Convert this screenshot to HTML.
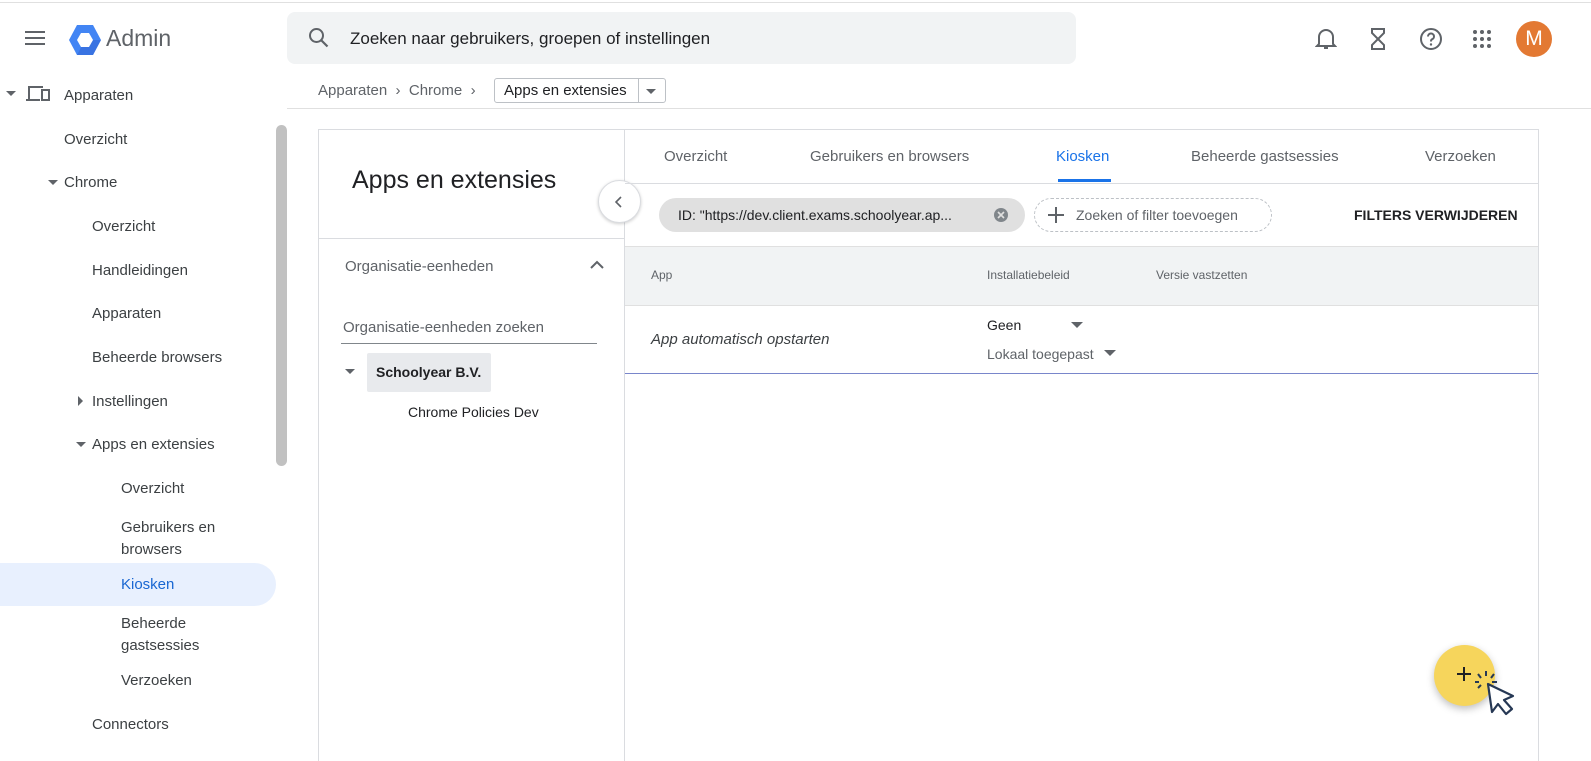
<!DOCTYPE html>
<html><head><meta charset="utf-8"><style>
*{box-sizing:border-box;margin:0;padding:0}
html,body{width:1591px;height:761px;overflow:hidden}
body{background:#fff;font-family:"Liberation Sans",sans-serif;color:#3c4043;position:relative}
.a{position:absolute;white-space:nowrap}
.nav{font-size:15px;color:#3c4043}
.tab{font-size:15px;color:#5f6368;top:148px}
</style></head><body>
<div class="a" style="left:0;top:0;width:1591px;height:3px;border-bottom:1px solid #e0e0e0"></div>
<svg class="a" style="left:24px;top:29px" width="22" height="18"><path d="M1 3h20M1 9h20M1 15h20" stroke="#5f6368" stroke-width="2"/></svg>
<svg class="a" style="left:68px;top:24px" width="34" height="32" viewBox="0 0 34 32"><polygon points="9,1 25,1 33,16 25,31 9,31 1,16" fill="#4285f4"/><polygon points="17,16 33,16 25,31 9,31" fill="#3367d6" opacity=".6"/><polygon points="13,9 21,9 25,16 21,23 13,23 9,16" fill="#fff"/></svg>
<div class="a" style="left:106px;top:25px;font-size:23px;color:#5f6368">Admin</div>
<div class="a" style="left:287px;top:12px;width:789px;height:52px;background:#f1f3f4;border-radius:8px"></div>
<svg class="a" style="left:308px;top:27px" width="22" height="22"><circle cx="8.5" cy="8.5" r="6.5" fill="none" stroke="#5f6368" stroke-width="2"/><path d="M13.5 13.5l6 6" stroke="#5f6368" stroke-width="2.2"/></svg>
<div class="a" style="left:350px;top:29px;font-size:17px;color:#202124">Zoeken naar gebruikers, groepen of instellingen</div>
<svg class="a" style="left:1315px;top:27px" width="22" height="24"><path d="M4 17V10a7 7 0 0 1 14 0v7l2 2H2z" fill="none" stroke="#5f6368" stroke-width="2"/><path d="M9 21h4" stroke="#5f6368" stroke-width="2"/></svg>
<svg class="a" style="left:1369px;top:27px" width="18" height="24"><path d="M2 2h14M2 22h14M3 2v4l6 6-6 6v4M15 2v4l-6 6 6 6v4" fill="none" stroke="#5f6368" stroke-width="2"/></svg>
<svg class="a" style="left:1419px;top:27px" width="24" height="24"><circle cx="12" cy="12" r="10" fill="none" stroke="#5f6368" stroke-width="2"/><path d="M9 9.5a3 3 0 1 1 4 2.8c-1 .5-1 1.2-1 2.2" fill="none" stroke="#5f6368" stroke-width="2"/><circle cx="12" cy="17.5" r="1.2" fill="#5f6368"/></svg>
<svg class="a" style="left:1472px;top:29px" width="20" height="20" fill="#5f6368"><circle cx="3" cy="3" r="2"/><circle cx="10" cy="3" r="2"/><circle cx="17" cy="3" r="2"/><circle cx="3" cy="10" r="2"/><circle cx="10" cy="10" r="2"/><circle cx="17" cy="10" r="2"/><circle cx="3" cy="17" r="2"/><circle cx="10" cy="17" r="2"/><circle cx="17" cy="17" r="2"/></svg>
<div class="a" style="left:1516px;top:21px;width:36px;height:36px;border-radius:50%;background:#e37933;color:#fff;font-size:21px;text-align:center;line-height:36px">M</div>
<svg class="a" style="left:6px;top:91px" width="10" height="6"><path d="M0 0h10L5 5z" fill="#5f6368"/></svg>
<svg class="a" style="left:25px;top:84px" width="26" height="20"><path d="M4 15V3h14" fill="none" stroke="#5f6368" stroke-width="2"/><path d="M1 16h14" stroke="#5f6368" stroke-width="2"/><rect x="17" y="6" width="7" height="10" fill="none" stroke="#5f6368" stroke-width="2"/></svg>
<div class="a nav" style="left:64px;top:87px">Apparaten</div>
<div class="a nav" style="left:64px;top:131px">Overzicht</div>
<svg class="a" style="left:48px;top:180px" width="10" height="6"><path d="M0 0h10L5 5z" fill="#5f6368"/></svg>
<div class="a nav" style="left:64px;top:174px">Chrome</div>
<div class="a nav" style="left:92px;top:218px">Overzicht</div>
<div class="a nav" style="left:92px;top:262px">Handleidingen</div>
<div class="a nav" style="left:92px;top:305px">Apparaten</div>
<div class="a nav" style="left:92px;top:349px">Beheerde browsers</div>
<svg class="a" style="left:78px;top:396px" width="6" height="10"><path d="M0 0v10l5-5z" fill="#5f6368"/></svg>
<div class="a nav" style="left:92px;top:393px">Instellingen</div>
<svg class="a" style="left:76px;top:442px" width="10" height="6"><path d="M0 0h10L5 5z" fill="#5f6368"/></svg>
<div class="a nav" style="left:92px;top:436px">Apps en extensies</div>
<div class="a nav" style="left:121px;top:480px">Overzicht</div>
<div class="a nav" style="left:121px;top:517px;line-height:22px">Gebruikers en<br>browsers</div>
<div class="a" style="left:0;top:563px;width:276px;height:43px;background:#e8f0fe;border-radius:0 22px 22px 0"></div>
<div class="a nav" style="left:121px;top:576px;color:#1967d2">Kiosken</div>
<div class="a nav" style="left:121px;top:613px;line-height:22px">Beheerde<br>gastsessies</div>
<div class="a nav" style="left:121px;top:672px">Verzoeken</div>
<div class="a nav" style="left:92px;top:716px">Connectors</div>
<div class="a" style="left:276px;top:125px;width:11px;height:341px;background:#c1c1c1;border-radius:6px"></div>
<div class="a" style="left:318px;top:82px;font-size:15px;color:#5f6368">Apparaten &nbsp;›&nbsp; Chrome &nbsp;›</div>
<div class="a" style="left:494px;top:78px;width:172px;height:25px;border:1px solid #bdc1c6;border-radius:3px"></div>
<div class="a" style="left:504px;top:82px;font-size:15px;color:#202124">Apps en extensies</div>
<div class="a" style="left:638px;top:78px;width:1px;height:25px;background:#bdc1c6"></div>
<svg class="a" style="left:646px;top:89px" width="10" height="6"><path d="M0 0h10L5 5z" fill="#5f6368"/></svg>
<div class="a" style="left:287px;top:108px;width:1304px;height:1px;background:#e0e0e0"></div>
<div class="a" style="left:318px;top:129px;width:1221px;height:632px;border:1px solid #dadce0;border-bottom:none"></div>
<div class="a" style="left:624px;top:129px;width:1px;height:632px;background:#dadce0"></div>
<div class="a" style="left:352px;top:166px;font-size:25px;color:#202124">Apps en extensies</div>
<div class="a" style="left:318px;top:238px;width:306px;height:1px;background:#dadce0"></div>
<div class="a" style="left:345px;top:258px;font-size:15px;color:#5f6368">Organisatie-eenheden</div>
<svg class="a" style="left:590px;top:260px" width="14" height="9"><path d="M1 8l6-6 6 6" fill="none" stroke="#5f6368" stroke-width="2"/></svg>
<div class="a" style="left:343px;top:319px;font-size:15px;color:#5f6368">Organisatie-eenheden zoeken</div>
<div class="a" style="left:341px;top:343px;width:256px;height:1px;background:#80868b"></div>
<svg class="a" style="left:345px;top:369px" width="10" height="6"><path d="M0 0h10L5 5z" fill="#5f6368"/></svg>
<div class="a" style="left:367px;top:353px;width:124px;height:39px;background:#e8eaed;border-radius:2px"></div>
<div class="a" style="left:376px;top:364px;font-size:14px;font-weight:bold;color:#202124">Schoolyear B.V.</div>
<div class="a" style="left:408px;top:404px;font-size:14px;color:#202124">Chrome Policies Dev</div>
<div class="a" style="left:598px;top:180px;width:43px;height:43px;border-radius:50%;background:#fff;border:1px solid #dadce0;box-shadow:0 1px 3px rgba(0,0,0,.2)"></div>
<svg class="a" style="left:615px;top:196px" width="8" height="12"><path d="M6 1L1 6l5 5" fill="none" stroke="#5f6368" stroke-width="1.6"/></svg>
<div class="a tab" style="left:664px">Overzicht</div>
<div class="a tab" style="left:810px">Gebruikers en browsers</div>
<div class="a tab" style="left:1056px;color:#1a73e8">Kiosken</div>
<div class="a" style="left:1058px;top:179px;width:53px;height:3px;background:#1a73e8"></div>
<div class="a tab" style="left:1191px">Beheerde gastsessies</div>
<div class="a tab" style="left:1425px">Verzoeken</div>
<div class="a" style="left:625px;top:183px;width:913px;height:1px;background:#dadce0"></div>
<div class="a" style="left:659px;top:198px;width:366px;height:34px;background:#e0e0e0;border-radius:17px"></div>
<div class="a" style="left:678px;top:207px;font-size:14px;color:#202124">ID: "https://dev.client.exams.schoolyear.ap...</div>
<svg class="a" style="left:993px;top:207px" width="16" height="16"><circle cx="8" cy="8" r="7" fill="#80868b"/><path d="M5 5l6 6M11 5l-6 6" stroke="#e0e0e0" stroke-width="1.6"/></svg>
<div class="a" style="left:1034px;top:198px;width:238px;height:34px;border:1px dashed #bdc1c6;border-radius:17px"></div>
<svg class="a" style="left:1047px;top:206px" width="18" height="18"><path d="M9 1v16M1 9h16" stroke="#5f6368" stroke-width="2"/></svg>
<div class="a" style="left:1076px;top:207px;font-size:14px;color:#5f6368">Zoeken of filter toevoegen</div>
<div class="a" style="left:1354px;top:207px;font-size:14px;font-weight:bold;color:#202124">FILTERS VERWIJDEREN</div>
<div class="a" style="left:625px;top:246px;width:913px;height:60px;background:#f1f3f4;border-top:1px solid #e0e0e0;border-bottom:1px solid #e0e0e0"></div>
<div class="a" style="left:651px;top:268px;font-size:12px;color:#5f6368">App</div>
<div class="a" style="left:987px;top:268px;font-size:12px;color:#5f6368">Installatiebeleid</div>
<div class="a" style="left:1156px;top:268px;font-size:12px;color:#5f6368">Versie vastzetten</div>
<div class="a" style="left:651px;top:331px;font-size:15px;font-style:italic;color:#3c4043">App automatisch opstarten</div>
<div class="a" style="left:987px;top:317px;font-size:14px;color:#202124">Geen</div>
<svg class="a" style="left:1071px;top:322px" width="12" height="7"><path d="M0 0h12L6 6z" fill="#5f6368"/></svg>
<div class="a" style="left:987px;top:346px;font-size:14px;color:#5f6368">Lokaal toegepast</div>
<svg class="a" style="left:1104px;top:350px" width="12" height="7"><path d="M0 0h12L6 6z" fill="#5f6368"/></svg>
<div class="a" style="left:625px;top:373px;width:913px;height:1px;background:#7986cb"></div>
<div class="a" style="left:1434px;top:645px;width:61px;height:61px;border-radius:50%;background:#f6d55c;box-shadow:0 3px 8px rgba(0,0,0,.25)"></div>
<svg class="a" style="left:1454px;top:664px" width="20" height="20"><path d="M10 3v14M3 10h14" stroke="#202124" stroke-width="2"/></svg>
<svg class="a" style="left:1470px;top:670px" width="60" height="56"><path d="M16 1v5M24 4l-3 4M8 4l3 4M27 12h-5M5 12h4M8 18l3-3" stroke="#263854" stroke-width="2"/><path d="M18 14l4 28 6-8 8 10 6-5-8-9 9-4z" fill="#fff" stroke="#263854" stroke-width="2.2" stroke-linejoin="round"/></svg>
</body></html>
